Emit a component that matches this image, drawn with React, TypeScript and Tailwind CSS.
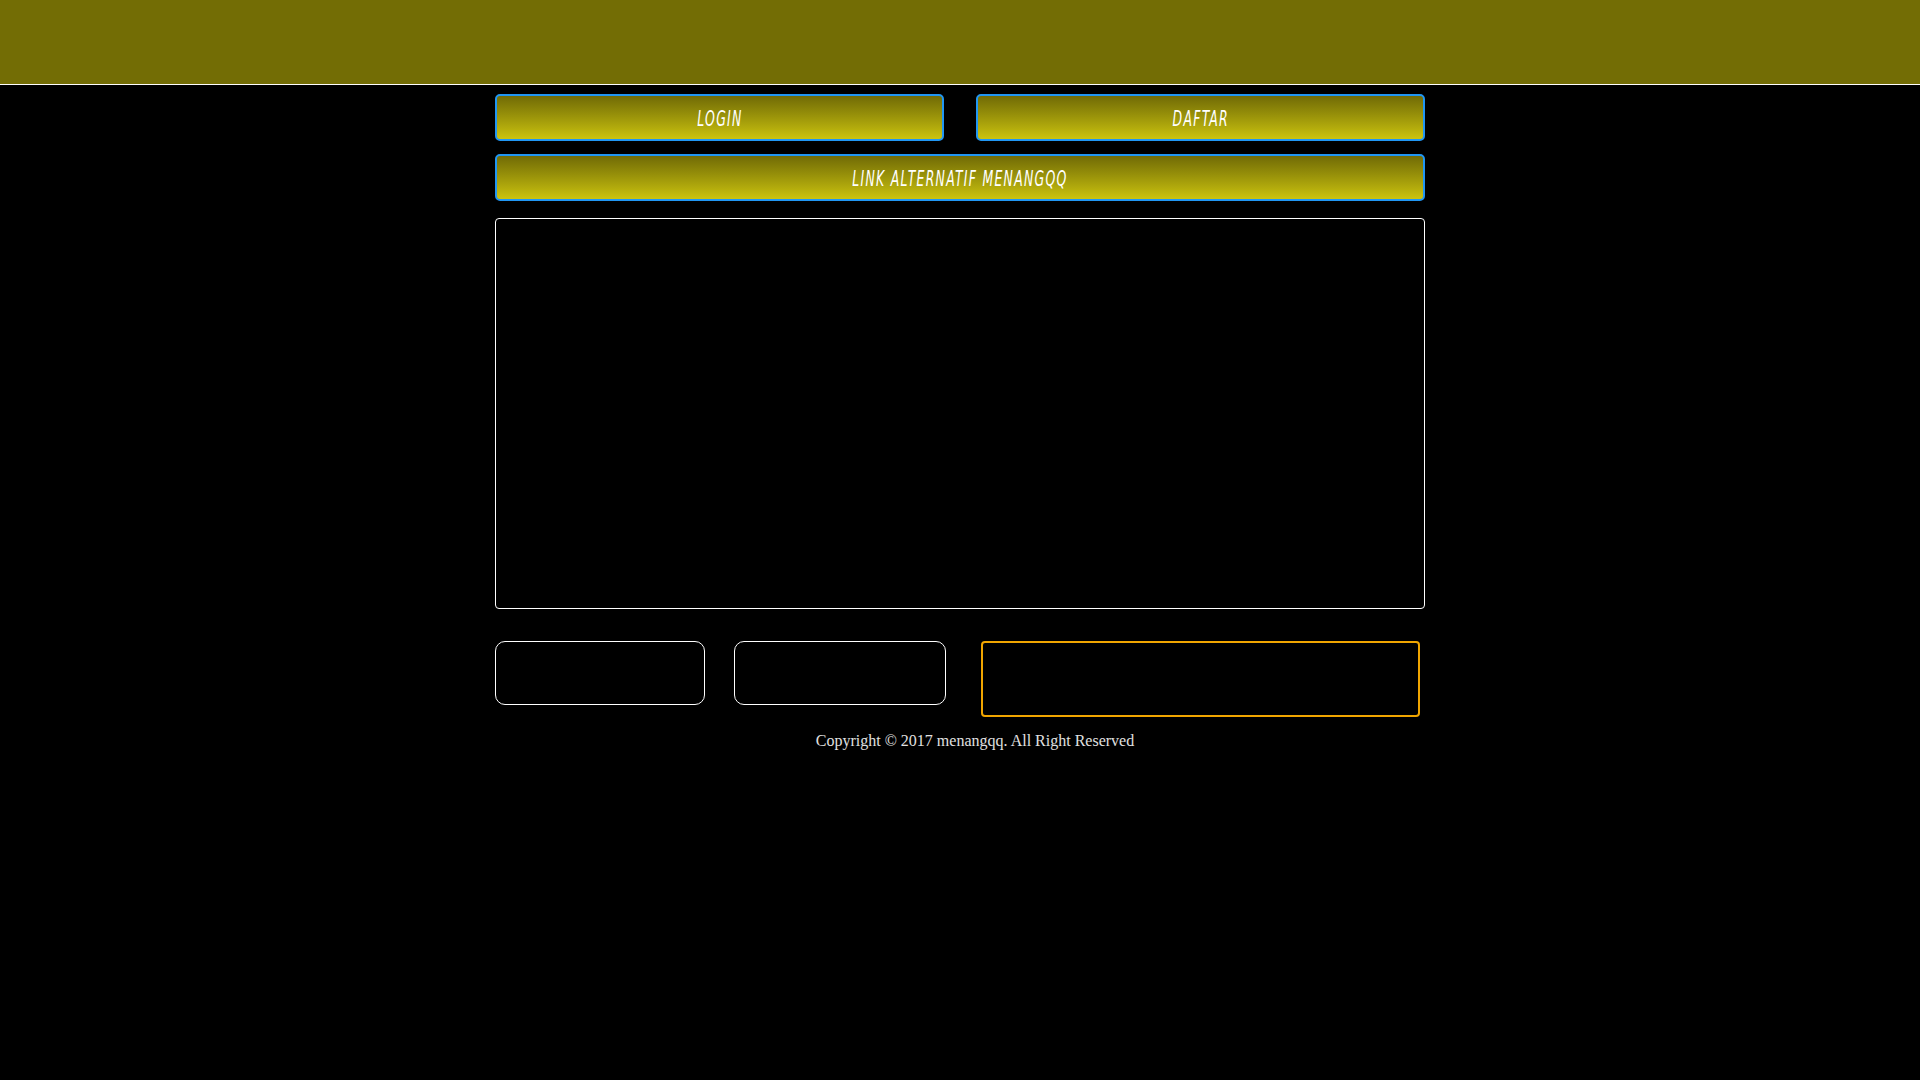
import React from "react";

function YellowButton({ label }: { label: string }) {
  return (
    <a
      href="#"
      className="flex h-[47px] items-center justify-center rounded-[5px] border-2 border-[#2196f3] bg-linear-to-b from-[#716b06] to-[#cbc30f] pt-[2px] text-white no-underline"
    >
      <span className="inline-block origin-center scale-x-[0.63] font-['Liberation_Sans_Narrow','DejaVu_Sans_Condensed',sans-serif] text-[22px] font-light italic leading-none tracking-[2px] whitespace-nowrap">
        {label}
      </span>
    </a>
  );
}

export default function App() {
  return (
    <div className="min-h-screen w-full bg-black">
      <header className="h-[85px] w-full border-b border-white bg-[#736d05]" />
      <main className="mx-auto w-[930px] pt-[9px]">
        <div className="grid grid-cols-2 gap-[32px]">
          <YellowButton label="LOGIN" />
          <YellowButton label="DAFTAR" />
        </div>
        <div className="mt-[13px]">
          <YellowButton label="LINK ALTERNATIF MENANGQQ" />
        </div>
        <div className="mt-[17px] h-[391px] rounded-[4px] border border-white bg-black" />
        <div className="mt-[32px] flex items-start">
          <div className="h-[64px] w-[210px] rounded-[10px] border border-white" />
          <div className="ml-[29px] h-[64px] w-[212px] rounded-[10px] border border-white" />
          <div className="ml-[35px] h-[76px] w-[439px] rounded-[4px] border-[2.5px] border-[#f0a500]" />
        </div>
        <div className="mt-[13px] pl-[30px] text-center font-['Liberation_Serif',serif] text-[16px] leading-[22px] text-[#e0e0e0]">
          Copyright © 2017 menangqq. All Right Reserved
        </div>
      </main>
    </div>
  );
}
